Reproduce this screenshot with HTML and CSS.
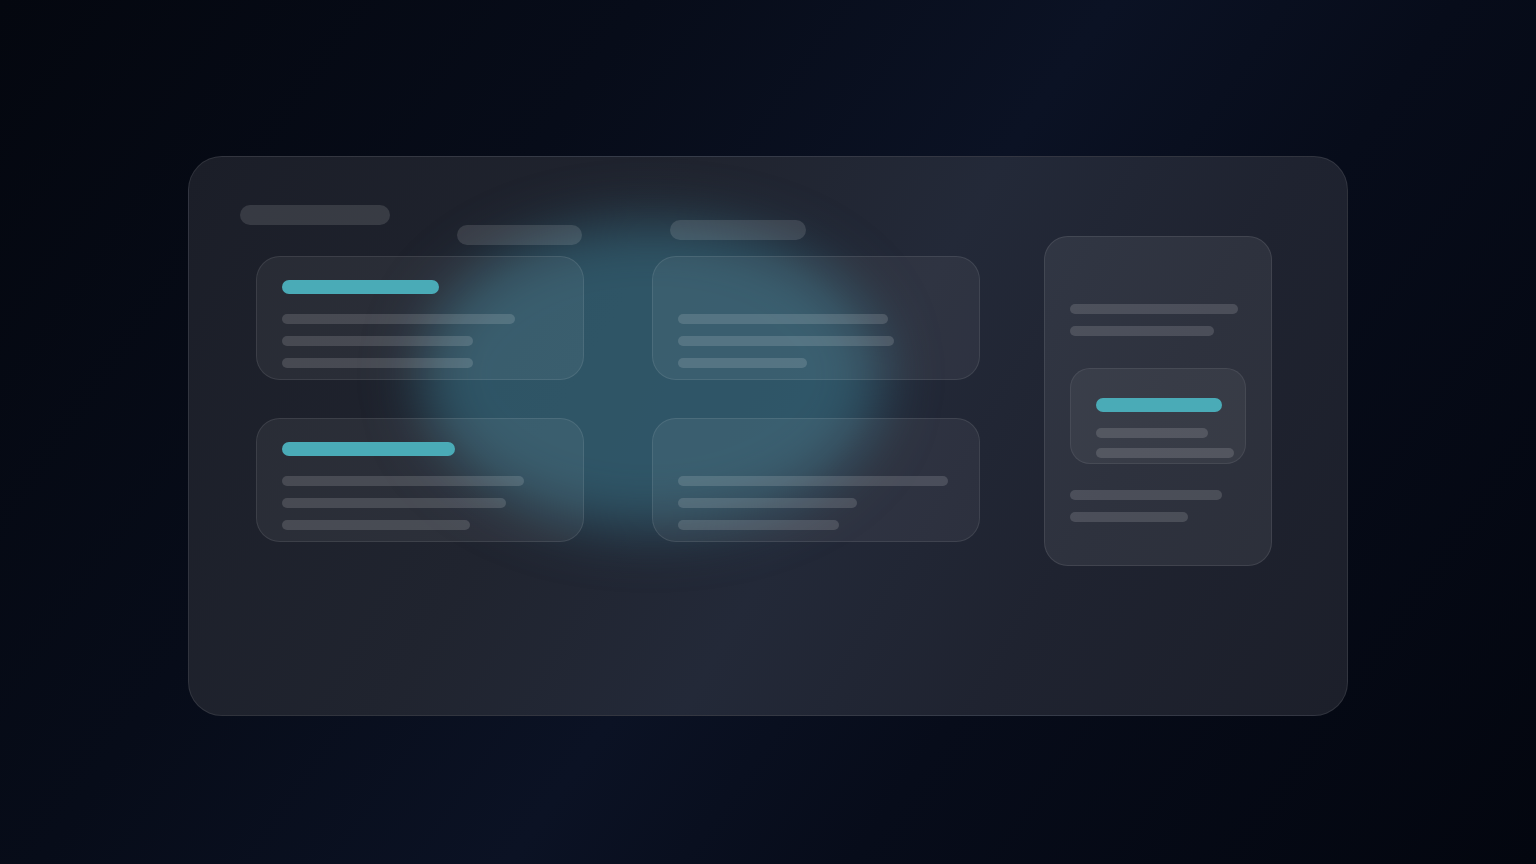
FILE: index.html
```html
<!DOCTYPE html>
<html lang="en">
<head>
<meta charset="utf-8">
<title>Dashboard skeleton</title>
<link rel="stylesheet" href="styles.css">
</head>
<body>
<div class="panel">
  <div class="glow"></div>
  <div class="main">
    <div class="pills">
      <span class="pill pill-a"></span>
      <span class="pill pill-b"></span>
      <span class="pill pill-c"></span>
    </div>
    <div class="grid">
      <div class="card">
        <span class="bar accent" style="width:157px"></span>
        <div class="lines">
          <span class="bar" style="width:233px"></span>
          <span class="bar" style="width:191px"></span>
          <span class="bar" style="width:191px"></span>
        </div>
      </div>
      <div class="card">
        <span class="bar accent hidden"></span>
        <div class="lines">
          <span class="bar" style="width:210px"></span>
          <span class="bar" style="width:216px"></span>
          <span class="bar" style="width:129px"></span>
        </div>
      </div>
      <div class="card">
        <span class="bar accent" style="width:173px"></span>
        <div class="lines">
          <span class="bar" style="width:242px"></span>
          <span class="bar" style="width:224px"></span>
          <span class="bar" style="width:188px"></span>
        </div>
      </div>
      <div class="card">
        <span class="bar accent hidden"></span>
        <div class="lines">
          <span class="bar" style="width:270px"></span>
          <span class="bar" style="width:179px"></span>
          <span class="bar" style="width:161px"></span>
        </div>
      </div>
    </div>
  </div>
  <aside class="side">
    <div class="lines">
      <span class="bar" style="width:168px"></span>
      <span class="bar" style="width:144px"></span>
    </div>
    <div class="inner">
      <span class="bar accent" style="width:126px"></span>
      <div class="inner-lines">
        <span class="bar" style="width:112px"></span>
        <span class="bar" style="width:138px"></span>
      </div>
    </div>
    <div class="lines">
      <span class="bar" style="width:152px"></span>
      <span class="bar" style="width:118px"></span>
    </div>
  </aside>
</div>
</body>
</html>
```

FILE: styles.css
```css
* { box-sizing: border-box; }

html, body {
  margin: 0;
  height: 864px;
  overflow: hidden;
}

body {
  font-family: "Inter", "Liberation Sans", sans-serif;
  background:
    linear-gradient(125deg, #04070f 0%, #070c19 30%, #0b1224 52%, #070c1a 68%, #03060f 100%);
  padding-top: 156px;
}

.panel {
  position: relative;
  width: 1160px;
  height: 560px;
  margin: 0 auto;
  border-radius: 34px;
  border: 1px solid rgba(255, 255, 255, 0.09);
  background: linear-gradient(120deg, #1b1e28 0%, #20242f 35%, #232938 55%, #1f2330 75%, #1c1f2a 100%);
  padding: 48px 0 0 51px;
  display: flex;
  align-items: flex-start;
  overflow: hidden;
}

.glow {
  position: absolute;
  left: 232px;
  top: 66px;
  width: 460px;
  height: 305px;
  border-radius: 50%;
  background: rgba(52, 104, 124, 0.72);
  filter: blur(28px);
  pointer-events: none;
}

.main {
  position: relative;
  display: flex;
  flex-direction: column;
}

.pills {
  display: flex;
  align-items: flex-start;
  height: 40px;
}

.pill {
  display: block;
  height: 20px;
  border-radius: 10px;
  background: rgba(255, 255, 255, 0.12);
}

.pill-a { width: 150px; }
.pill-b { width: 125px; margin: 20px 0 0 67px; }
.pill-c { width: 136px; margin: 15px 0 0 88px; }

.grid {
  margin: 11px 0 0 16px;
  display: grid;
  grid-template-columns: 328px 328px;
  column-gap: 68px;
  row-gap: 38px;
}

.card {
  height: 124px;
  border-radius: 24px;
  border: 1px solid rgba(255, 255, 255, 0.09);
  background: rgba(255, 255, 255, 0.055);
  padding: 23px 25px 0;
}

.bar {
  display: block;
  height: 10px;
  border-radius: 5px;
  background: rgba(255, 255, 255, 0.14);
}

.bar.accent {
  height: 14px;
  border-radius: 7px;
  background: #4aabb7;
}

.bar.hidden { visibility: hidden; }

.lines {
  display: flex;
  flex-direction: column;
  gap: 12px;
}

.card .lines { margin-top: 20px; }

.side {
  position: relative;
  width: 228px;
  height: 330px;
  margin: 31px 0 0 64px;
  border-radius: 24px;
  border: 1px solid rgba(255, 255, 255, 0.09);
  background: rgba(255, 255, 255, 0.07);
  padding: 67px 0 0 25px;
}

.inner {
  width: 176px;
  height: 96px;
  margin: 32px 0 26px;
  border-radius: 20px;
  border: 1px solid rgba(255, 255, 255, 0.07);
  background: rgba(255, 255, 255, 0.05);
  padding: 29px 0 0 25px;
}

.inner-lines {
  margin-top: 16px;
  display: flex;
  flex-direction: column;
  gap: 10px;
}
```
